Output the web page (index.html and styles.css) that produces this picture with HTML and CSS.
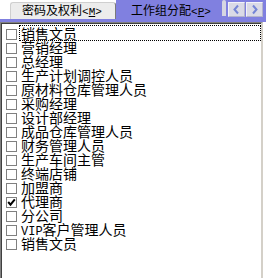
FILE: index.html
```html
<!DOCTYPE html>
<html>
<head>
<meta charset="utf-8">
<link rel="stylesheet" href="styles.css">
</head>
<body>
<div class="win">
  <div class="tabs">
    <div class="lead">
      <div class="tab">密码及权利<span class="key">&lt;<u>M</u>&gt;</span></div>
    </div>
    <div class="tab-active">工作组分配<span class="key">&lt;<u>P</u>&gt;</span></div>
    <div class="spin">
      <div class="notch"></div>
      <div class="sbtn"><svg width="15" height="13" viewBox="0 0 15 13"><path d="M9 2.5 L5.5 6.5 L9 10.5" fill="none" stroke="#7585d6" stroke-width="2"/></svg></div>
      <div class="sbtn"><svg width="15" height="13" viewBox="0 0 15 13"><path d="M6 2.5 L9.5 6.5 L6 10.5" fill="none" stroke="#7585d6" stroke-width="2"/></svg></div>
    </div>
  </div>
  <div class="list">
    <div class="row"><span class="cb"></span><span class="lbl focus">销售文员</span></div>
    <div class="row"><span class="cb"></span><span class="lbl">营销经理</span></div>
    <div class="row"><span class="cb"></span><span class="lbl">总经理</span></div>
    <div class="row"><span class="cb"></span><span class="lbl">生产计划调控人员</span></div>
    <div class="row"><span class="cb"></span><span class="lbl">原材料仓库管理人员</span></div>
    <div class="row"><span class="cb"></span><span class="lbl">采购经理</span></div>
    <div class="row"><span class="cb"></span><span class="lbl">设计部经理</span></div>
    <div class="row"><span class="cb"></span><span class="lbl">成品仓库管理人员</span></div>
    <div class="row"><span class="cb"></span><span class="lbl">财务管理人员</span></div>
    <div class="row"><span class="cb"></span><span class="lbl">生产车间主管</span></div>
    <div class="row"><span class="cb"></span><span class="lbl">终端店铺</span></div>
    <div class="row"><span class="cb"></span><span class="lbl">加盟商</span></div>
    <div class="row"><span class="cb"><svg width="9" height="9" viewBox="0 0 9 9"><path d="M1.2 4 L3.5 6.6 L7.8 1.4" fill="none" stroke="#000" stroke-width="2"/></svg></span><span class="lbl">代理商</span></div>
    <div class="row"><span class="cb"></span><span class="lbl">分公司</span></div>
    <div class="row"><span class="cb"></span><span class="lbl"><span class="latin">VIP</span>客户管理人员</span></div>
    <div class="row"><span class="cb"></span><span class="lbl">销售文员</span></div>
  </div>
</div>
</body>
</html>
```
FILE: styles.css
```css
html, body {
  margin: 0;
  padding: 0;
  background: #fff;
}
body {
  width: 266px;
  height: 278px;
  overflow: hidden;
  font-family: "Noto Sans CJK SC", sans-serif;
  color: #000;
}
.tabs {
  display: flex;
  height: 22px;
  background: #8080e0;
}
.lead {
  width: 116px;
  height: 19px;
  box-sizing: border-box;
  padding: 2px 0 0 10px;
  background: #fff;
  flex: none;
}
.tab {
  height: 17px;
  box-sizing: border-box;
  background: #ececec;
  border: 1px solid #cfcfcf;
  border-bottom: none;
  border-right-color: #7a7a7a;
  border-radius: 3px 3px 0 0;
  padding: 1px 0 0 11px;
  font-size: 12px;
  line-height: 12px;
  white-space: nowrap;
}
.tab-active {
  width: 106px;
  flex: none;
  box-sizing: border-box;
  padding: 4px 0 0 15px;
  font-size: 12px;
  line-height: 12px;
  white-space: nowrap;
}
.key {
  font-family: "Liberation Mono", monospace;
  font-size: 11px;
}
.spin {
  flex: 1;
  display: flex;
  align-items: flex-start;
}
.notch {
  width: 4px;
  height: 16px;
  background: #d6d6e2;
  border-radius: 2px 2px 0 0;
  margin-right: 2px;
}
.sbtn {
  width: 17px;
  height: 15px;
  box-sizing: border-box;
  margin-top: 2px;
  margin-right: 1px;
  background: #dadae6;
  border: 1px solid #f2f2fa;
  border-right-color: #b4b4cc;
  border-bottom-color: #b4b4cc;
  display: flex;
  align-items: center;
  justify-content: center;
}
.list {
  width: 263px;
  height: 256px;
  box-sizing: border-box;
  border-top: 1px solid #808080;
  border-left: 1px solid #808080;
  border-right: 2px solid #d4d0c8;
  box-shadow: inset 1px 1px 0 #404040;
  padding-top: 3px;
  background: #fff;
}
.row {
  display: flex;
  align-items: flex-start;
  height: 14px;
}
.cb {
  flex: none;
  width: 11px;
  height: 11px;
  box-sizing: border-box;
  border: 1px solid #808080;
  background: #fff;
  margin: 3px 0 0 5px;
  display: flex;
  align-items: center;
  justify-content: center;
}
.lbl {
  margin-left: 3px;
  padding-left: 1px;
  font-size: 14px;
  line-height: 14px;
  height: 14px;
  white-space: nowrap;
}
.focus {
  flex: 1;
  margin-right: 1px;
  outline: 1px dotted #000;
}
.latin {
  font-family: "Liberation Mono", monospace;
  font-size: 12px;
}
```
